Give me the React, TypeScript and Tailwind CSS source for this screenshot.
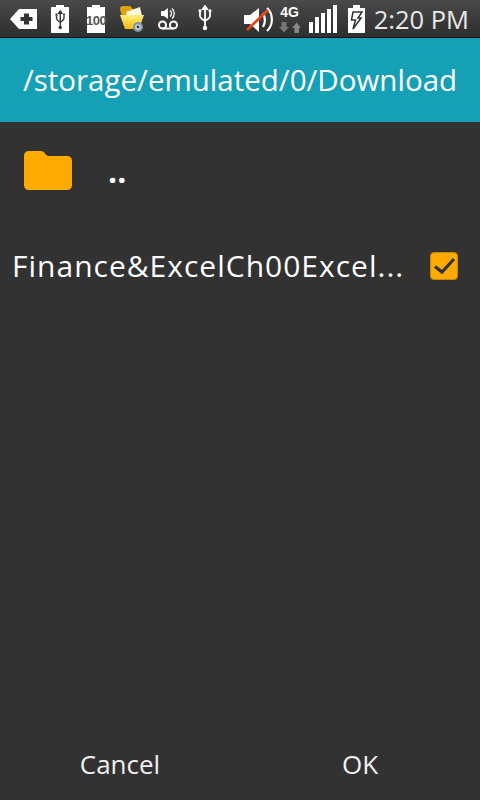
import type { ReactNode } from "react";

function StatusIcon({ w, children }: { w: number; children: ReactNode }) {
  return (
    <svg width={w} height={28} viewBox={`0 0 ${w} 28`} className="shrink-0">
      {children}
    </svg>
  );
}

function UsbGlyph({ x, y, s, color }: { x: number; y: number; s: number; color: string }) {
  return (
    <g transform={`translate(${x} ${y}) scale(${s})`} stroke={color} fill="none" strokeWidth="1.8">
      <path d="M7 0V22" />
      <path d="M2 6V10C2 12 4 13 7 15C10 13 12 12 12 10V6" />
      <path d="M7 0L4.8 3.2H9.2Z" fill={color} />
      <rect x="0.6" y="3.4" width="2.8" height="2.8" fill={color} stroke="none" />
      <circle cx="12" cy="4.8" r="1.5" fill={color} stroke="none" />
      <circle cx="7" cy="22" r="2.2" fill={color} stroke="none" />
    </g>
  );
}

function StatusBar() {
  return (
    <div className="h-[38px] shrink-0 bg-gradient-to-b from-[#4a4a4a] to-[#2e2e2e] border-b border-[#111] flex items-center">
      <div className="flex items-center h-full pt-[1px]">
        <div className="ml-[10px]">
          <StatusIcon w={27}>
            <path d="M0 14L9 4H27V24H9Z" fill="#fff" />
            <path d="M14 8.5H19V12H22.5V16H19V19.5H14V16H10.5V12H14Z" fill="#333" />
          </StatusIcon>
        </div>
        <div className="ml-[14px]">
          <StatusIcon w={18}>
            <path d="M5 0H13V2H18V28H0V2H5Z" fill="#fff" />
            <UsbGlyph x={4} y={6} s={0.75} color="#333" />
          </StatusIcon>
        </div>
        <div className="ml-[18px] relative">
          <StatusIcon w={18}>
            <path d="M5 0H13V2H18V28H0V2H5Z" fill="#fff" />
          </StatusIcon>
          <span className="absolute left-[-1px] top-[9px] w-[20px] text-center text-[13px] leading-[14px] font-bold text-[#555] font-['Liberation_Sans',sans-serif] tracking-[-0.5px]">
            100
          </span>
        </div>
        <div className="ml-[15px]">
          <StatusIcon w={24}>
            <defs>
              <linearGradient id="folderFront" x1="0" y1="0" x2="0" y2="1">
                <stop offset="0" stopColor="#fff07a" />
                <stop offset="1" stopColor="#f5b90f" />
              </linearGradient>
            </defs>
            <path d="M0 4C0 2 1 1 3 1H10L13 4H20V20H4Z" fill="#e0a010" />
            <path d="M6 7L20 2L22 11L8 14Z" fill="#fff8dc" />
            <path d="M0 10H24L19 24H5Z" fill="url(#folderFront)" />
            <circle cx="18" cy="22" r="5" fill="#7f97a8" />
            <circle cx="18" cy="22" r="2.8" fill="#d5dde2" />
            <circle cx="18" cy="22" r="1.4" fill="#2e3c48" />
          </StatusIcon>
        </div>
        <div className="ml-[14px]">
          <StatusIcon w={20}>
            <path d="M3 6H6L10 3V14L6 11H3Z" fill="#fff" />
            <path d="M12 5.5C14 7 14 10 12 11.5M14 3.5C17 6 17 11 14 13.5" stroke="#fff" strokeWidth="1.3" fill="none" />
            <circle cx="4.5" cy="20" r="3.5" stroke="#fff" strokeWidth="2" fill="none" />
            <circle cx="15.5" cy="20" r="3.5" stroke="#fff" strokeWidth="2" fill="none" />
            <path d="M4.5 23.5H15.5" stroke="#fff" strokeWidth="2" />
          </StatusIcon>
        </div>
        <div className="ml-[20px]">
          <StatusIcon w={14}>
            <UsbGlyph x={0} y={1} s={1} color="#fff" />
          </StatusIcon>
        </div>
      </div>
      <div className="ml-auto flex items-center h-full pt-[1px]">
        <StatusIcon w={29}>
          <path d="M0 10H6L15 3V27L6 19H0Z" fill="#fff" />
          <path d="M19 8C21.5 12 21.5 18 19 22M23 3C29.5 9 29.5 20 23 26" stroke="#fff" strokeWidth="2.2" fill="none" />
          <path d="M3 25L24 5" stroke="#f0401c" strokeWidth="2.6" />
        </StatusIcon>
        <div className="ml-[6px] w-[22px] flex flex-col items-center h-[28px]">
          <span className="text-[14px] leading-[13px] mt-[1px] font-bold text-white font-['Liberation_Sans',sans-serif]">4G</span>
          <svg width="22" height="11" viewBox="0 0 22 11" className="mt-[3px]">
            <path d="M2.5 5H7.5V0H2.5ZM0 5L5 10.5L10 5Z" fill="#777" />
            <path d="M15.5 11H20V6H15.5ZM13 6L17.75 0.5L22 6Z" fill="#888" />
          </svg>
        </div>
        <div className="ml-[8px]">
          <StatusIcon w={28}>
            <path d="M0 17H4V28H0ZM6 12H10V28H6ZM12 8H16V28H12ZM18 4H22V28H18ZM24 0H28V28H24Z" fill="#fff" />
          </StatusIcon>
        </div>
        <div className="ml-[11px]">
          <StatusIcon w={17}>
            <path d="M5 0H12V3H17V28H0V3H5Z" fill="#fff" />
            <path d="M5 7H14L10 13H13L5 24L7.5 15H3.5Z" fill="none" stroke="#333" strokeWidth="1.5" />
          </StatusIcon>
        </div>
        <span className="ml-[9px] mr-[11px] text-[25.5px] leading-[28px] text-[#e8e8e8] font-['Open_Sans',sans-serif]">2:20 PM</span>
      </div>
    </div>
  );
}

export default function App() {
  return (
    <div className="w-[480px] h-[800px] bg-[#323232] flex flex-col overflow-hidden font-['Open_Sans',sans-serif] text-white">
      <StatusBar />

      <div className="h-[84px] shrink-0 bg-[#16a0b5] flex items-center justify-center">
        <span className="text-[29.5px] leading-none">/storage/emulated/0/Download</span>
      </div>

      <div className="flex-1">
        <div className="h-[96px] flex items-center pl-[24px]">
          <svg width="48" height="39" viewBox="0 0 48 39">
            <path
              d="M5 0H17C19 0 20 1 21 2.5C22 4 23 5 25 5H43C46 5 48 7 48 10V34C48 37 46 39 43 39H5C2 39 0 37 0 34V5C0 2 2 0 5 0Z"
              fill="#ffaa00"
            />
          </svg>
          <span className="ml-[36px] mt-[2px] text-[32px] leading-none font-bold">..</span>
        </div>

        <div className="h-[92px] flex items-center pl-[12px] pr-[22px] pt-[3px]">
          <span className="flex-1 text-[30px] leading-none tracking-[1px] whitespace-nowrap">Finance&amp;ExcelCh00Excel...</span>
          <div className="w-[28px] h-[28px] rounded-[4px] bg-[#ffaa00] border border-[#c98600]">
            <svg width="26" height="26" viewBox="1 1 26 26">
              <path d="M5 14.5L12 20L24 7" stroke="#333" strokeWidth="3.2" fill="none" />
            </svg>
          </div>
        </div>
      </div>

      <div className="h-[70px] shrink-0 flex items-center text-[26px] text-[#f0f0f0] pb-[2px]">
        <button className="w-[240px] text-center">Cancel</button>
        <button className="w-[240px] text-center">OK</button>
      </div>
    </div>
  );
}
